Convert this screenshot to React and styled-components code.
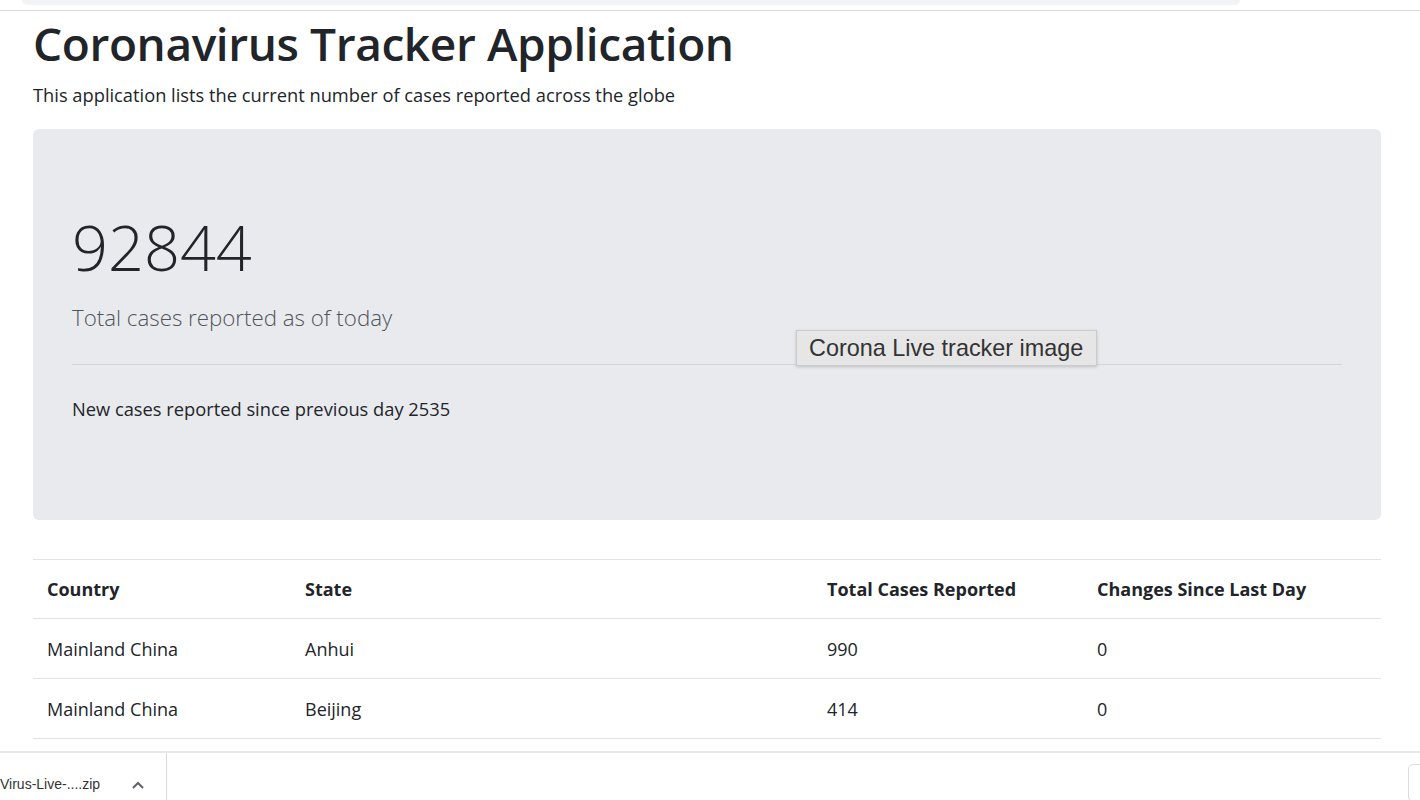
import React from "react";
import styled, { createGlobalStyle } from "styled-components";

const GlobalStyle = createGlobalStyle`
  html, body {
    margin: 0;
    padding: 0;
    background: #fff;
    overflow: hidden;
  }
  body {
    font-family: "Open Sans", "Noto Sans", sans-serif;
    color: #212529;
    font-size: 19.2px;
    line-height: 1.5;
  }
`;

const Page = styled.div`
  width: 1420px;
  height: 800px;
  position: relative;
  overflow: hidden;
`;

const TopStrip = styled.div`
  height: 11px;
  border-bottom: 1px solid #dcdcdc;
  box-sizing: border-box;
  padding: 0 180px 0 22px;
`;

const TopPill = styled.div`
  height: 5px;
  background: #f1f3f4;
  border-radius: 0 0 7px 7px;
`;

const Main = styled.main`
  width: 1348px;
  margin-left: 33px;
`;

const Title = styled.h1`
  margin: 5px 0 0;
  font-size: 46px;
  font-weight: 600;
  line-height: 1.2;
  letter-spacing: -0.4px;
`;

const Intro = styled.p`
  margin: 10px 0 0;
  font-size: 18.3px;
`;

const Jumbotron = styled.section`
  position: relative;
  margin-top: 20px;
  height: 391px;
  box-sizing: border-box;
  padding: 80px 39px;
  background: #e9eaee;
  border-radius: 6px;
`;

const BigNumber = styled.h2`
  margin: 0;
  font-size: 63px;
  font-weight: 300;
  line-height: 1.2;
`;

const Lead = styled.p`
  margin: 17px 0 0;
  font-size: 22.3px;
  font-weight: 300;
  color: #50555b;
`;

const Rule = styled.hr`
  margin: 29px 0 30px;
  border: 0;
  border-top: 1px solid #d3d5d9;
`;

const Note = styled.p`
  margin: 0;
  font-size: 18.3px;
`;

const Tooltip = styled.div`
  position: absolute;
  left: 763px;
  top: 201px;
  padding: 4px 13px 4px 12px;
  background: #e6e6e6;
  border: 1px solid #cbcbcb;
  box-shadow: 0 1px 3px rgba(0, 0, 0, 0.18);
  font-family: "Liberation Sans", Arial, sans-serif;
  font-size: 23.4px;
  line-height: 26px;
  color: #333;
  white-space: nowrap;
`;

const Table = styled.table`
  margin-top: 39px;
  width: 100%;
  table-layout: fixed;
  border-collapse: collapse;
  font-size: 18px;
`;

const HeadCell = styled.th`
  box-sizing: border-box;
  width: ${(p) => p.$w}px;
  padding: 14px;
  line-height: 30px;
  text-align: left;
  font-weight: 700;
  border-top: 1px solid #e2e3e8;
  border-bottom: 1px solid #e2e3e8;
`;

const Cell = styled.td`
  padding: 15px 14px 14px;
  line-height: 30px;
  border-bottom: 1px solid #e2e3e8;
`;

const DownloadBar = styled.footer`
  position: fixed;
  left: 0;
  right: 0;
  bottom: 0;
  height: 47px;
  background: #fff;
  border-top: 2px solid #e8e8e8;
  display: flex;
  align-items: center;
  font-family: "Liberation Sans", Arial, sans-serif;
`;

const DownloadItem = styled.div`
  display: flex;
  align-items: center;
  height: 100%;
  border-right: 1px solid #dadada;
  width: 167px;
  box-sizing: border-box;
`;

const FileName = styled.span`
  font-size: 14px;
  color: #333;
  width: 131px;
  margin-top: 16px;
`;

const Chevron = styled.svg`
  margin-top: 16px;
`;

const Spacer = styled.div`
  flex: 1;
`;

const ShowAll = styled.div`
  width: 40px;
  height: 36px;
  margin: 12px -30px 0 0;
  border: 1px solid #dadce0;
  border-radius: 5px;
`;

const columns = [
  { label: "Country", width: 258 },
  { label: "State", width: 522 },
  { label: "Total Cases Reported", width: 270 },
  { label: "Changes Since Last Day", width: 298 },
];

const rows = [
  ["Mainland China", "Anhui", 990, 0],
  ["Mainland China", "Beijing", 414, 0],
];

export default function App() {
  return (
    <Page>
      <GlobalStyle />
      <TopStrip>
        <TopPill />
      </TopStrip>
      <Main>
        <Title>Coronavirus Tracker Application</Title>
        <Intro>This application lists the current number of cases reported across the globe</Intro>
        <Jumbotron>
          <BigNumber>92844</BigNumber>
          <Lead>Total cases reported as of today</Lead>
          <Rule />
          <Note>New cases reported since previous day 2535</Note>
          <Tooltip>Corona Live tracker image</Tooltip>
        </Jumbotron>
        <Table>
          <thead>
            <tr>
              {columns.map((c) => (
                <HeadCell key={c.label} $w={c.width}>
                  {c.label}
                </HeadCell>
              ))}
            </tr>
          </thead>
          <tbody>
            {rows.map((r) => (
              <tr key={r[1]}>
                {r.map((v, i) => (
                  <Cell key={i}>{v}</Cell>
                ))}
              </tr>
            ))}
          </tbody>
        </Table>
      </Main>
      <DownloadBar>
        <DownloadItem>
          <FileName>Virus-Live-....zip</FileName>
          <Chevron width="14" height="10" viewBox="0 0 14 10">
            <path d="M2 8 L7 3 L12 8" fill="none" stroke="#5f6368" strokeWidth="2" />
          </Chevron>
        </DownloadItem>
        <Spacer />
        <ShowAll />
      </DownloadBar>
    </Page>
  );
}
